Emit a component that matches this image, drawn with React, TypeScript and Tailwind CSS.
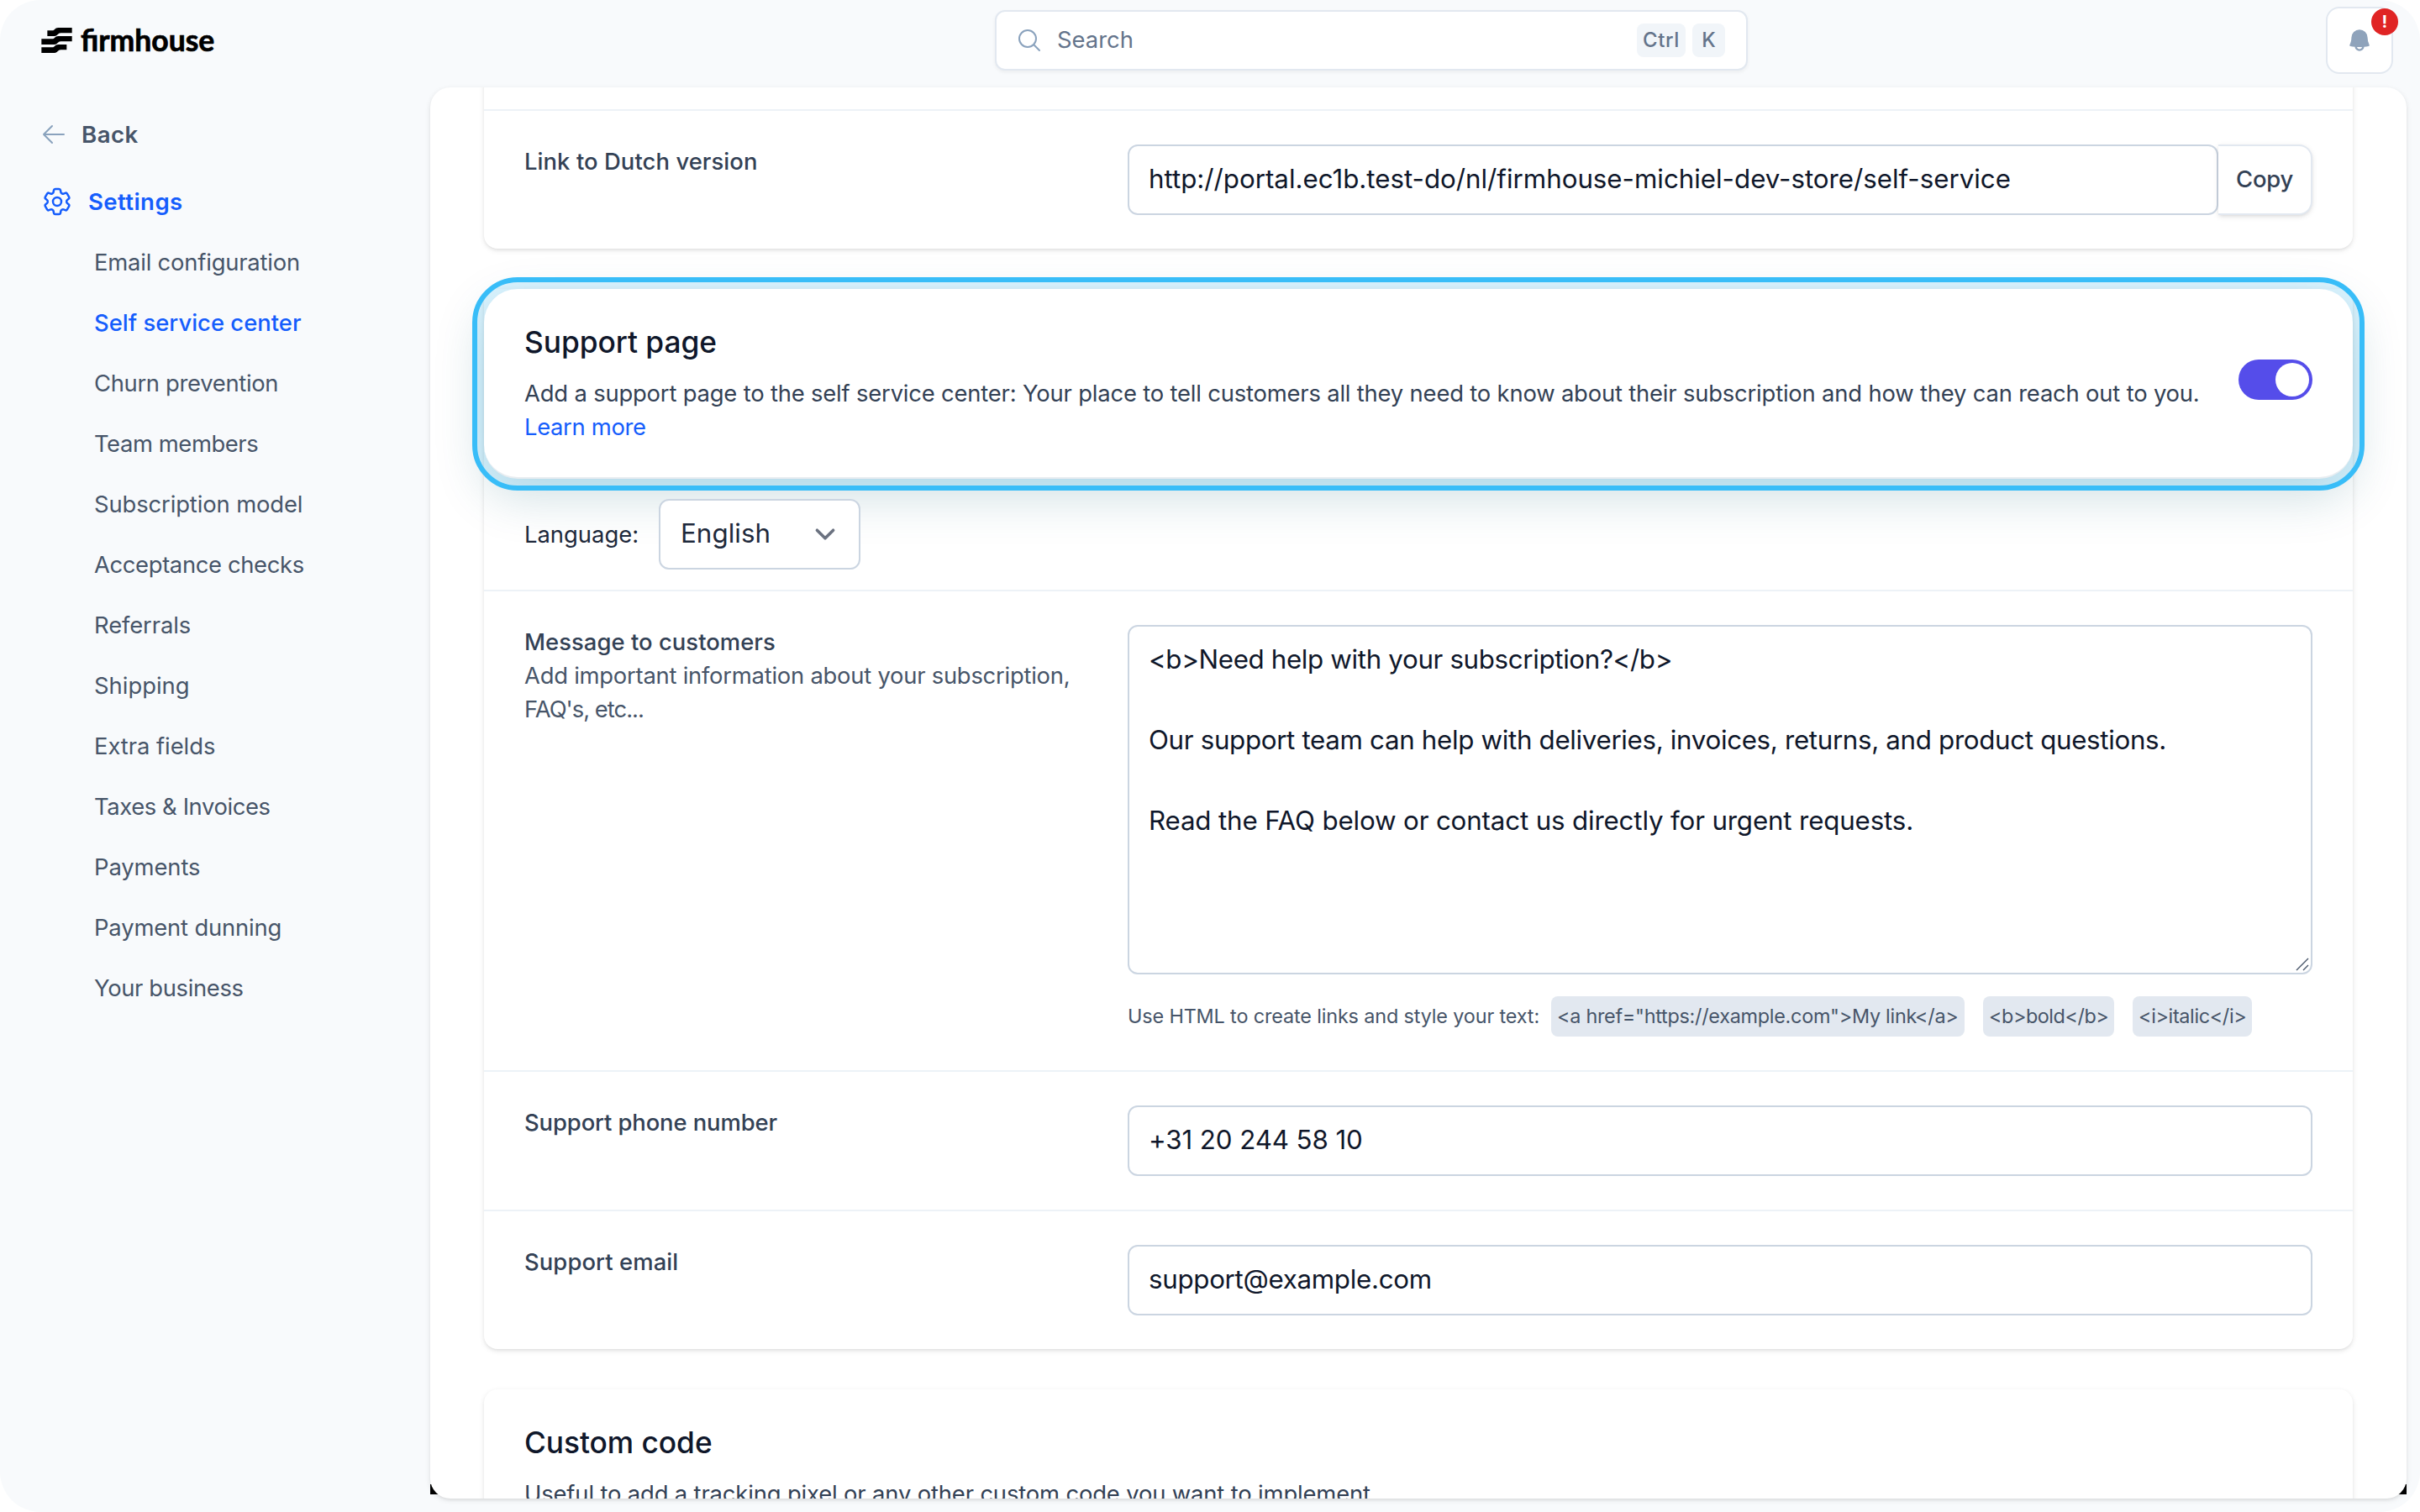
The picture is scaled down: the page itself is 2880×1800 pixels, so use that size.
import type { ReactNode } from 'react'
import {
  HiMiniBell,
  HiOutlineArrowLeft,
  HiOutlineCog6Tooth,
  HiOutlineMagnifyingGlass,
} from 'react-icons/hi2'

const navItems = [
  { label: 'Email configuration', tracking: 'tracking-[-0.2px]' },
  { label: 'Self service center', tracking: 'tracking-[0.02px]', active: true },
  { label: 'Churn prevention', tracking: 'tracking-[-0.32px]' },
  { label: 'Team members', tracking: 'tracking-[-0.42px]' },
  { label: 'Subscription model', tracking: 'tracking-[-0.12px]' },
  { label: 'Acceptance checks', tracking: 'tracking-[-0.36px]' },
  { label: 'Referrals', tracking: 'tracking-[-0.1px]' },
  { label: 'Shipping', tracking: 'tracking-[0px]' },
  { label: 'Extra fields', tracking: 'tracking-[-0.05px]' },
  { label: 'Taxes & Invoices', tracking: 'tracking-[-0.4px]' },
  { label: 'Payments', tracking: 'tracking-[-0.1px]' },
  { label: 'Payment dunning', tracking: 'tracking-[-0.16px]' },
  { label: 'Your business', tracking: 'tracking-[-0.36px]' },
]

const cardShadow = 'shadow-[0_2px_6px_rgba(0,0,0,0.1),0_2px_4px_-2px_rgba(0,0,0,0.1)]'

function Logo() {
  return (
    <div className="flex h-[30px] items-center">
      <svg className="h-[30px] w-[37px]" viewBox="0 0 109 90" fill="#000">
        <path d="M21 10H39C48 10 47 0 60 0H109V19H69C58 19 58 30 47 30H21Z" />
        <path d="M0 40H39C48 40 47 30 60 30H109V49H69C58 49 58 60 47 60H0Z" />
        <path d="M0 70H39C48 70 47 60 60 60H90V79H69C58 79 58 90 47 90H0Z" />
      </svg>
      <span className="-mt-px ml-[10px] font-['Lato',sans-serif] text-[35.5px] leading-[30px] font-bold text-black [-webkit-text-stroke:0.7px_#000]">
        firmhouse
      </span>
    </div>
  )
}

function Header() {
  return (
    <header className="flex h-[104px] shrink-0 items-start pr-8 pl-[49px]">
      <div className="w-[1135px] pt-[33px]">
        <Logo />
      </div>
      <div className="mt-3 flex h-[72px] w-[896px] items-center rounded-xl border-2 border-[#e2e8f0] bg-white pr-[25px] pl-[23px] shadow-[0_2px_4px_rgba(0,0,0,0.05)]">
        <HiOutlineMagnifyingGlass className="size-8 text-[#8aa2bd]" />
        <span className="ml-[17px] flex-1 text-[27.4px] text-[#64748b]">Search</span>
        <kbd className="flex h-10 w-[58px] items-center justify-center rounded-lg bg-[#f1f5f9] font-['Inter',sans-serif] text-[24px] font-medium tracking-[0.6px] text-[#64748b]">
          Ctrl
        </kbd>
        <kbd className="ml-2 flex h-10 w-[39px] items-center justify-center rounded-lg bg-[#f1f5f9] font-['Inter',sans-serif] text-[24px] font-medium text-[#64748b]">
          K
        </kbd>
      </div>
      <div className="relative mt-2 ml-auto flex size-20 items-center justify-center rounded-2xl border-2 border-[#e2e8f0] bg-white">
        <HiMiniBell className="size-8 text-[#8fa3bb]" />
        <span className="absolute top-0 -right-2 flex size-8 items-center justify-center rounded-full bg-[#e02424] text-[20px] font-bold text-white">
          !
        </span>
      </div>
    </header>
  )
}

function Sidebar() {
  return (
    <aside className="w-[512px] shrink-0 pt-9 pl-12">
      <a className="flex h-10 items-center">
        <HiOutlineArrowLeft className="size-8 text-[#8aa2bd]" />
        <span className="mt-0.5 ml-[17px] text-[27.6px] font-semibold tracking-[0.5px] text-[#475569]">Back</span>
      </a>
      <a className="mt-10 flex h-10 items-center text-[#155dfc]">
        <HiOutlineCog6Tooth className="size-10" />
        <span className="mt-0.5 ml-[17px] text-[27.6px] font-semibold tracking-[0.4px]">Settings</span>
      </a>
      <nav className="mt-8 flex flex-col gap-8 pl-16">
        {navItems.map((item) => (
          <a
            key={item.label}
            className={`h-10 text-[27.4px] leading-10 ${item.tracking} ${
              item.active ? 'font-medium text-[#155dfc]' : 'text-[#475569]'
            }`}
          >
            {item.label}
          </a>
        ))}
      </nav>
    </aside>
  )
}

function Row({ label, children }: { label: ReactNode; children: ReactNode }) {
  return (
    <div className="flex border-t-2 border-[#edf2f7] px-12 py-10">
      <div className="w-[718px] shrink-0 text-[27.4px] leading-10">{label}</div>
      <div className="flex-1">{children}</div>
    </div>
  )
}

function Field({ children }: { children: ReactNode }) {
  return (
    <div className="flex h-[84px] items-center rounded-xl border-2 border-[#cbd5e1] bg-white px-[23px] pb-px text-[31.3px] text-[#0f172a]">
      {children}
    </div>
  )
}

function Tag({ children }: { children: ReactNode }) {
  return (
    <code className="flex h-12 items-center justify-center rounded-lg bg-[#e2e8f0] px-2 font-['Inter',sans-serif]">
      {children}
    </code>
  )
}

function LinkCard() {
  return (
    <section className={`-mt-8 rounded-2xl bg-white pt-[58px] ${cardShadow}`}>
      <Row label={<span className="font-medium tracking-[0.08px] text-[#334155]">Link to Dutch version</span>}>
        <div className="flex">
          <div className="w-[1298px]">
            <Field>
              <span className="tracking-[-0.02px]">
                http://portal.ec1b.test-do/nl/firmhouse-michiel-dev-store/self-service
              </span>
            </Field>
          </div>
          <button className="flex h-[84px] w-28 items-center justify-center rounded-r-2xl border-2 border-l-0 border-[#e2e8f0] bg-white text-[27.4px] font-medium tracking-[-0.2px] text-[#334155] shadow-[0_2px_6px_rgba(0,0,0,0.1),0_2px_4px_-2px_rgba(0,0,0,0.1)]">
            Copy
          </button>
        </div>
      </Row>
    </section>
  )
}

function SupportHeader() {
  return (
    <div className="relative z-10 flex h-[226px] rounded-[40px] border-b-2 border-[#e8edf1] bg-white px-12 pt-10 shadow-[0_0_0_8px_rgba(56,189,248,0.18),0_20px_60px_rgba(0,90,110,0.2)] outline-[6px] outline-offset-[8px] outline-[#38bdf8]">
      <div className="w-[2040px]">
        <h2 className="mt-px text-[35.3px] leading-[46px] font-medium tracking-[-0.05px] text-[#0f172a]">Support page</h2>
        <p className="mt-[17px] text-[27.4px] leading-10 whitespace-nowrap text-[#334155]">
          <span className="tracking-[-0.183px]">
            Add a support page to the self service center: Your place to tell customers all they need to know about their
            subscription and how they can reach out to you.
          </span>
          <br />
          <a className="tracking-[-0.33px] text-[#155dfc]">Learn more</a>
        </p>
      </div>
      <div className="mt-11 flex h-12 w-[88px] items-center justify-end rounded-full bg-[#554dea] pr-1">
        <span className="size-10 rounded-full bg-white" />
      </div>
    </div>
  )
}

function SupportCard() {
  return (
    <section className={`mt-12 rounded-2xl bg-white ${cardShadow}`}>
      <SupportHeader />
      <div className="flex h-[132px] items-center px-12">
        <span className="w-[160px] pt-px text-[27.4px] text-[#1e293b]">Language:</span>
        <div className="relative z-20 flex h-[84px] w-60 items-center justify-between rounded-xl border-2 border-[#cbd5e1] bg-white pr-4 pl-6 text-[31.3px] text-[#1e293b]">
          <span className="pb-px tracking-[0.05px]">English</span>
          <svg className="size-12" viewBox="0 0 20 20" fill="none" stroke="#6b7280" strokeWidth="1.5" strokeLinecap="round" strokeLinejoin="round">
            <path d="M6 8l4 4 4-4" />
          </svg>
        </div>
      </div>
      <Row
        label={
          <>
            <div className="font-medium tracking-[0.05px] text-[#334155]">Message to customers</div>
            <div className="tracking-[-0.24px] text-[#475569]">
              Add important information about your subscription,
              <br />
              <span className="tracking-[-1px]">FAQ's, etc...</span>
            </div>
          </>
        }
      >
        <div className="relative h-[416px] rounded-xl border-2 border-[#cbd5e1] bg-white px-[23px] pt-[15px] text-[31.3px] leading-[48px] text-[#0f172a]">
          <div className="tracking-[-0.35px]">{'<b>Need help with your subscription?</b>'}</div>
          <div className="mt-12 tracking-[-0.33px]">
            Our support team can help with deliveries, invoices, returns, and product questions.
          </div>
          <div className="mt-12 tracking-[-0.16px]">Read the FAQ below or contact us directly for urgent requests.</div>
          <svg className="absolute right-0.5 bottom-0.5 size-4" viewBox="0 0 16 16" stroke="#475569" strokeWidth="1.4">
            <path d="M1 15L15 1M9 15L15 9" />
          </svg>
        </div>
        <div className="mt-[26px] flex h-12 items-center text-[23.4px] whitespace-nowrap text-[#475569]">
          <span className="w-[504px] tracking-[-0.14px]">Use HTML to create links and style your text:</span>
          <Tag>
            <span className="-ml-px w-[477px] tracking-[-0.27px]">{'<a href="https://example.com">My link</a>'}</span>
          </Tag>
          <div className="ml-[22px]">
            <Tag>
              <span className="-ml-px w-[141px] tracking-[-0.45px]">{'<b>bold</b>'}</span>
            </Tag>
          </div>
          <div className="ml-[22px]">
            <Tag>
              <span className="-ml-px w-[127px] tracking-[-0.35px]">{'<i>italic</i>'}</span>
            </Tag>
          </div>
        </div>
      </Row>
      <Row label={<span className="font-medium tracking-[-0.1px] text-[#334155]">Support phone number</span>}>
        <Field>
          <span className="tracking-[-0.1px]">+31 20 244 58 10</span>
        </Field>
      </Row>
      <Row label={<span className="font-medium tracking-[0.1px] text-[#334155]">Support email</span>}>
        <Field>
          <span className="tracking-[-0.3px]">support@example.com</span>
        </Field>
      </Row>
    </section>
  )
}

function CustomCodeCard() {
  return (
    <section className={`mt-12 h-[300px] rounded-2xl bg-white px-12 pt-10 ${cardShadow}`}>
      <h2 className="mt-px text-[35.3px] leading-[46px] font-medium tracking-[-0.05px] text-[#0f172a]">Custom code</h2>
      <p className="mt-[17px] text-[27.4px] leading-10 tracking-[-0.15px] text-[#334155]">
        Useful to add a tracking pixel or any other custom code you want to implement.
      </p>
    </section>
  )
}

export default function App() {
  return (
    <div className="h-[1800px] w-[2880px] overflow-hidden bg-white font-['Inter',sans-serif]">
      <div className="flex h-full flex-col overflow-hidden rounded-[48px] bg-[#f8fafc]">
        <Header />
        <div className="flex h-[1680px]">
          <Sidebar />
          <div className="relative h-full w-[2352px]">
            <div className="absolute bottom-[5px] left-0 h-3 w-3 bg-black" />
            <div className="absolute right-0 bottom-[5px] h-3 w-3 bg-black" />
            <main className="relative h-full overflow-hidden rounded-3xl bg-white px-16 shadow-[0_2px_6px_rgba(0,0,0,0.1),0_2px_4px_-2px_rgba(0,0,0,0.1)]">
              <LinkCard />
              <SupportCard />
              <CustomCodeCard />
            </main>
          </div>
        </div>
      </div>
    </div>
  )
}
